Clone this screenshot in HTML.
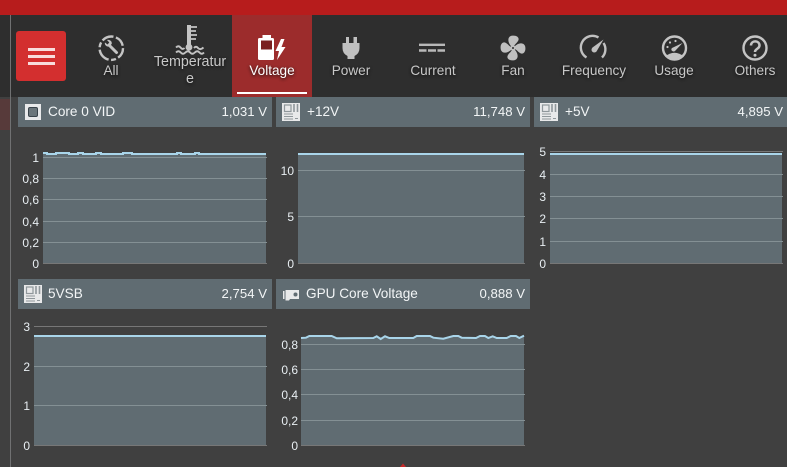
<!DOCTYPE html>
<html><head><meta charset="utf-8"><style>
html,body{margin:0;padding:0;background:#404040;}
#p{position:relative;width:787px;height:467px;overflow:hidden;background:#404040;font-family:"Liberation Sans",sans-serif;}
#p div{position:absolute;}
.lab{top:63px;width:80px;text-align:center;font-size:13.6px;line-height:16px;color:#c8c8c8;text-shadow:0 1px 3px #111;}
.hd{height:30px;background:#606c72;}
.t{top:7px;font-size:13.6px;line-height:16px;color:#f2f5f6;white-space:nowrap;}
.v{top:7px;right:5px;font-size:13.2px;line-height:16px;color:#f2f5f6;white-space:nowrap;}
.y{font-size:12px;line-height:14px;color:#e8eef2;text-align:right;width:24px;}
svg{position:absolute;overflow:visible;}
</style></head><body><div id="p">
<div style="left:0;top:0;width:787px;height:15px;background:#b71c1c"></div>
<div style="left:0;top:15px;width:787px;height:82px;background:#2e2e2e"></div>
<div style="left:0;top:99px;width:10px;height:31px;background:#573a3a"></div>
<div style="left:10px;top:15px;width:1px;height:452px;background:#707172"></div>
<div style="left:16px;top:31px;width:50px;height:50px;background:#d32f2f;border-radius:3px"></div>
<div style="left:28px;top:47.500px;width:27px;height:3px;background:#f8dcdc"></div>
<div style="left:28px;top:54.500px;width:27px;height:3px;background:#f8dcdc"></div>
<div style="left:28px;top:62px;width:27px;height:3px;background:#f8dcdc"></div>
<div style="left:232px;top:15px;width:80px;height:82px;background:#9c2c2c"></div>
<div style="left:237px;top:92px;width:70px;height:2px;background:#fff"></div>

<svg style="left:0;top:0" width="787" height="97" viewBox="0 0 787 97">
<!-- All -->
<circle cx="111.300" cy="48.200" r="11.700" fill="none" stroke="#c4c4c4" stroke-width="2.400" stroke-dasharray="11 2.500 5 2.500 14 2.500 5 2.500 12 2.500"/>
<path d="M109.500 45.500L116.500 52.500" stroke="#c4c4c4" stroke-width="3" stroke-linecap="round"/>
<path d="M105 42.500l2.500 2 1.800-2-2.300-2.500c2.800-.8 5.300 1.200 4.700 4l-2.500 2.500c-2.800.5-5-1.800-4.200-4z" fill="#c4c4c4"/>
<!-- Temperature -->
<path d="M187 25h4v19.500a3.400 3.400 0 1 1-4 0z" fill="#c4c4c4"/>
<path d="M191 27h6M191 31h5M191 35h6M191 39h5" stroke="#c4c4c4" stroke-width="1.800" fill="none"/>
<path d="M176 47.500q2.500-2.500 4.500 0t4 .5M194 48q2-2.500 4 0t5.500-.5" stroke="#c4c4c4" stroke-width="1.900" fill="none"/>
<path d="M176 52.500q2.500-2.500 4.700 0t4.700 0 4.700 0 4.700 0 4.700 0 4.500 0" stroke="#c4c4c4" stroke-width="1.900" fill="none"/>
<!-- Voltage -->
<path d="M262.500 35h8.500v3h1.500q1.500 0 1.500 1.500v19q0 1.500-1.500 1.500h-13q-1.500 0-1.500-1.500v-19q0-1.500 1.500-1.500h3z" fill="#fff"/>
<rect x="261" y="40.500" width="11" height="9" fill="#7a1f1f"/>
<path d="M281 39L275.500 51H279L277 60L285.500 47H281.500L284.500 39Z" fill="#fff"/>
<!-- Power -->
<path d="M346 37h3v6h4.500v-6h3.500v6h2.500v5q0 5.500-5 8v3h-7v-3q-5-2.500-5-8v-5h3.500z" fill="#c0c0c0"/>
<!-- Current -->
<path d="M419 44.800h26" stroke="#b8b8b8" stroke-width="2.400" fill="none"/>
<path d="M419 50.500h7.500M428 50.500h8M437.500 50.500h7.500" stroke="#b8b8b8" stroke-width="2.400" fill="none"/>
<!-- Fan -->
<g fill="#c0c0c0">
<path d="M512 47C507.500 43 507 37 511.500 35.800C517 34.700 520 38 518 41C516.500 43.500 514.500 44 514 47Z"/>
<path d="M512 47C507.500 43 507 37 511.500 35.800C517 34.700 520 38 518 41C516.500 43.500 514.500 44 514 47Z" transform="rotate(90 513 48)"/>
<path d="M512 47C507.500 43 507 37 511.500 35.800C517 34.700 520 38 518 41C516.500 43.500 514.500 44 514 47Z" transform="rotate(180 513 48)"/>
<path d="M512 47C507.500 43 507 37 511.500 35.800C517 34.700 520 38 518 41C516.500 43.500 514.500 44 514 47Z" transform="rotate(270 513 48)"/>
</g>
<circle cx="513" cy="48" r="2.500" fill="#c0c0c0"/><circle cx="513" cy="48" r="1" fill="#2e2e2e"/>
<!-- Frequency -->
<path d="M586.500 57.500a11.500 11.500 0 0 1 12-20M603.500 43a11.500 11.500 0 0 1-1.500 14.500" fill="none" stroke="#c0c0c0" stroke-width="2.400"/>
<path d="M603.500 39.500L592.500 47.500c-2.800 3 1 6.800 4 4z" fill="#c0c0c0"/>
<!-- Usage -->
<circle cx="674.500" cy="48" r="11.500" fill="none" stroke="#c4c4c4" stroke-width="2.400"/>
<path d="M665 56.500Q674.500 49 684 56.500Q674.500 62 665 56.500Z" fill="#c4c4c4"/>
<path d="M682.500 43L672 48c-2 2 1 4.500 3 3z" fill="#c4c4c4"/>
<circle cx="667.500" cy="47" r="1.100" fill="#c4c4c4"/><circle cx="670" cy="42.500" r="1.100" fill="#c4c4c4"/><circle cx="675.500" cy="41" r="1.100" fill="#c4c4c4"/>
<!-- Others -->
<circle cx="755" cy="48" r="11.500" fill="none" stroke="#c4c4c4" stroke-width="2.400"/>
<path d="M751 45.500c0-5.500 8.500-5.500 8.500 0 0 3.500-4.500 3-4.500 6.500" fill="none" stroke="#c4c4c4" stroke-width="2.500"/>
<circle cx="755" cy="55.200" r="1.500" fill="#c4c4c4"/>
</svg>

<div class="lab" style="left:71px">All</div>
<div class="lab" style="left:150px;top:54px;line-height:17px;width:80px;font-size:14.300px">Temperatur<br>e</div>
<div class="lab" style="left:232px;color:#fff">Voltage</div>
<div class="lab" style="left:311px">Power</div>
<div class="lab" style="left:393px">Current</div>
<div class="lab" style="left:473px">Fan</div>
<div class="lab" style="left:554px">Frequency</div>
<div class="lab" style="left:634px">Usage</div>
<div class="lab" style="left:715px">Others</div>

<!-- headers -->
<div class="hd" style="left:18px;top:97px;width:254px"><div class="t" style="left:30px">Core 0 VID</div><div class="v">1,031 V</div></div>
<div class="hd" style="left:276px;top:97px;width:254px"><div class="t" style="left:31px">+12V</div><div class="v">11,748 V</div></div>
<div class="hd" style="left:534px;top:97px;width:253px"><div class="t" style="left:31px">+5V</div><div class="v" style="right:4px">4,895 V</div></div>
<div class="hd" style="left:18px;top:279px;width:254px"><div class="t" style="left:30px">5VSB</div><div class="v">2,754 V</div></div>
<div class="hd" style="left:276px;top:279px;width:254px"><div class="t" style="left:30px">GPU Core Voltage</div><div class="v">0,888 V</div></div>

<svg style="left:0;top:0" width="787" height="467" viewBox="0 0 787 467">
<defs>
<g id="mb"><rect width="18" height="18" fill="#e8e9ea"/><rect x="2.500" y="2" width="6.500" height="6.500" fill="none" stroke="#8f979b" stroke-width="1.200"/><path d="M12 1v8M15.500 1v8" stroke="#8f979b" stroke-width="1.600"/><path d="M2 11h9M2 13.500h9M2 16h9M13 15.500h3" stroke="#8f979b" stroke-width="1"/></g>
</defs>
<rect x="25" y="104" width="16" height="16" fill="#e8e9ea"/><rect x="28.500" y="107.500" width="9" height="9" rx="1.500" fill="#6a757a" stroke="#39434a"/>
<use href="#mb" x="282" y="103"/>
<use href="#mb" x="540" y="103"/>
<use href="#mb" x="24" y="285"/>
<path d="M283 291h1.500v8H283zM285.500 290h13.500v9h-9l-1 1.500h-3.500z" fill="#e8e9ea"/><circle cx="295.500" cy="294.500" r="2" fill="#606c72"/>

<!-- chart 1 -->
<rect x="43" y="153" width="223" height="110.500" fill="#606c72"/>
<path d="M43 157.500H267M43 178.500H267M43 199.500H267M43 221.500H267M43 242.500H267" stroke="#849094"/>
<path d="M43 263.500H267" stroke="#777"/>
<path d="M43 153H47V154H56V153H69V154H78V153H83V154H96V153H101V154H123V153H132V154H177V153H181V154H195V153H199V154H266" fill="none" stroke="#a9d5ea" stroke-width="2"/>

<!-- chart 2 -->
<rect x="298" y="154" width="226" height="109.500" fill="#606c72"/>
<path d="M298 170.500H525M298 216.500H525" stroke="#849094"/>
<path d="M298 263.500H525" stroke="#777"/>
<path d="M298 154H524" stroke="#a9d5ea" stroke-width="2"/>

<!-- chart 3 -->
<path d="M550 151.500H783" stroke="#777"/>
<rect x="550" y="154" width="232" height="109.500" fill="#606c72"/>
<path d="M550 174.500H783M550 196.500H783M550 218.500H783M550 241.500H783" stroke="#849094"/>
<path d="M550 263.500H783" stroke="#777"/>
<path d="M550 154H782" stroke="#a9d5ea" stroke-width="2"/>

<!-- chart 4 -->
<path d="M34 326.500H267" stroke="#777"/>
<rect x="34" y="336" width="232" height="109.500" fill="#606c72"/>
<path d="M34 366.500H267M34 405.500H267" stroke="#849094"/>
<path d="M34 445.500H267" stroke="#777"/>
<path d="M34 336H266" stroke="#a9d5ea" stroke-width="2"/>

<!-- chart 5 -->
<path d="M301 338L306 337.700L309.300 336L331.700 336L336.700 338.300L373.300 338L376.700 336.300L380.700 339L385 336.300L389.300 338L413.300 338L416.700 336L430 336L433.300 337.700L443.300 338.700L453.300 336L458.300 336L461.700 337.700L476 338L480 336L485 336L488.300 338L492.700 336.300L496.700 338L506.700 338L510.700 336L516 336L519.300 338L524 335.700V445.500H301Z" fill="#606c72"/>
<path d="M301 344.500H525M301 369.500H525M301 394.500H525M301 420.500H525" stroke="#849094"/>
<path d="M301 445.500H525" stroke="#777"/>
<path d="M301 338L306 337.700L309.300 336L331.700 336L336.700 338.300L373.300 338L376.700 336.300L380.700 339L385 336.300L389.300 338L413.300 338L416.700 336L430 336L433.300 337.700L443.300 338.700L453.300 336L458.300 336L461.700 337.700L476 338L480 336L485 336L488.300 338L492.700 336.300L496.700 338L506.700 338L510.700 336L516 336L519.300 338L524 335.700" fill="none" stroke="#a9d5ea" stroke-width="2"/>
<path d="M400 467l3-3.500 3 3.500z" fill="#c62828"/>
</svg>

<!-- axis labels -->
<div class="y" style="left:15px;top:151px">1</div>
<div class="y" style="left:15px;top:172px">0,8</div>
<div class="y" style="left:15px;top:193px">0,6</div>
<div class="y" style="left:15px;top:215px">0,4</div>
<div class="y" style="left:15px;top:236px">0,2</div>
<div class="y" style="left:15px;top:257px">0</div>
<div class="y" style="left:270px;top:164px">10</div>
<div class="y" style="left:270px;top:210px">5</div>
<div class="y" style="left:270px;top:257px">0</div>
<div class="y" style="left:522px;top:145px">5</div>
<div class="y" style="left:522px;top:168px">4</div>
<div class="y" style="left:522px;top:190px">3</div>
<div class="y" style="left:522px;top:212px">2</div>
<div class="y" style="left:522px;top:235px">1</div>
<div class="y" style="left:522px;top:257px">0</div>
<div class="y" style="left:6px;top:320px">3</div>
<div class="y" style="left:6px;top:360px">2</div>
<div class="y" style="left:6px;top:399px">1</div>
<div class="y" style="left:6px;top:439px">0</div>
<div class="y" style="left:274px;top:338px">0,8</div>
<div class="y" style="left:274px;top:363px">0,6</div>
<div class="y" style="left:274px;top:388px">0,4</div>
<div class="y" style="left:274px;top:414px">0,2</div>
<div class="y" style="left:274px;top:439px">0</div>
</div></body></html>
